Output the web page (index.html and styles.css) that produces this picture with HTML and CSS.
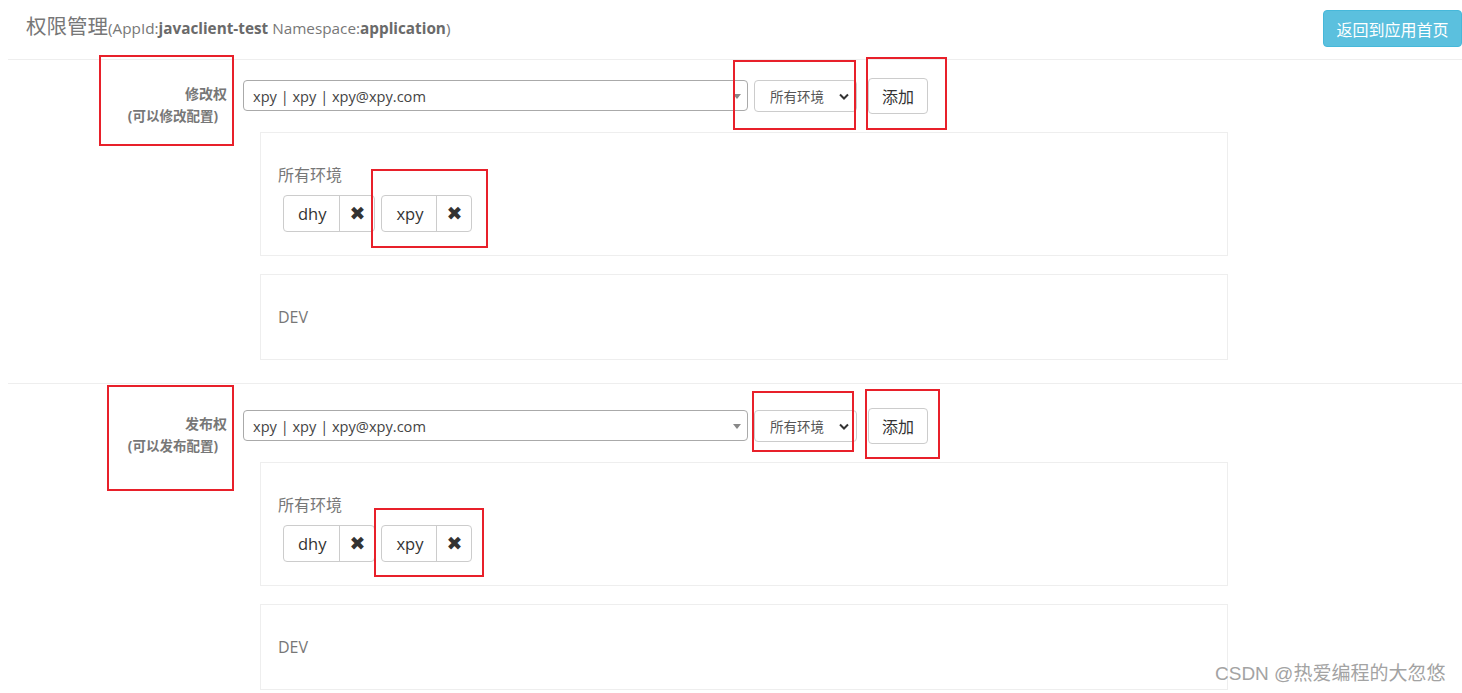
FILE: index.html
```html
<!DOCTYPE html>
<html lang="zh-CN">
<head>
    <meta charset="UTF-8">
    <meta name="viewport" content="width=device-width, initial-scale=1.0">
    <title>权限管理</title>
    <link rel="stylesheet" href="styles.css">
</head>
<body>
    <div class="page">
        <div class="header">
            <div class="title">
                <span class="title-main">权限管理</span><span class="title-sub">(AppId:<b>javaclient-test</b> Namespace:<b>application</b>)</span>
            </div>
            <button class="btn-info">返回到应用首页</button>
        </div>

        <!-- 修改权 -->
        <div class="perm-section first">
            <div class="form-row">
                <div class="perm-label">
                    <div>修改权</div>
                    <div class="perm-hint">(可以修改配置)</div>
                </div>
                <div class="user-select">
                    <span>xpy | xpy | xpy@xpy.com</span>
                    <span class="caret"></span>
                </div>
                <div class="env-select">
                    <span>所有环境</span>
                    <svg width="10" height="7" viewBox="0 0 10 7"><polyline points="1,1.5 5,5.5 9,1.5" fill="none" stroke="#333" stroke-width="2"/></svg>
                </div>
                <button class="btn-default">添加</button>
            </div>
            <div class="panels">
                <div class="panel">
                    <div class="panel-title">所有环境</div>
                    <div class="chips">
                        <div class="chip"><span class="chip-name">dhy</span><span class="chip-remove">✖</span></div>
                        <div class="chip"><span class="chip-name">xpy</span><span class="chip-remove">✖</span></div>
                    </div>
                </div>
                <div class="panel">
                    <div class="panel-title">DEV</div>
                </div>
            </div>
        </div>

        <!-- 发布权 -->
        <div class="perm-section">
            <div class="form-row">
                <div class="perm-label">
                    <div>发布权</div>
                    <div class="perm-hint">(可以发布配置)</div>
                </div>
                <div class="user-select">
                    <span>xpy | xpy | xpy@xpy.com</span>
                    <span class="caret"></span>
                </div>
                <div class="env-select">
                    <span>所有环境</span>
                    <svg width="10" height="7" viewBox="0 0 10 7"><polyline points="1,1.5 5,5.5 9,1.5" fill="none" stroke="#333" stroke-width="2"/></svg>
                </div>
                <button class="btn-default">添加</button>
            </div>
            <div class="panels">
                <div class="panel">
                    <div class="panel-title">所有环境</div>
                    <div class="chips">
                        <div class="chip"><span class="chip-name">dhy</span><span class="chip-remove">✖</span></div>
                        <div class="chip"><span class="chip-name">xpy</span><span class="chip-remove">✖</span></div>
                    </div>
                </div>
                <div class="panel">
                    <div class="panel-title">DEV</div>
                </div>
            </div>
        </div>
    </div>

    <!-- screenshot annotations -->
    <div class="mark" style="left:99px;top:55px;width:135px;height:91px"></div>
    <div class="mark" style="left:733px;top:60px;width:123px;height:70px"></div>
    <div class="mark" style="left:866px;top:57px;width:81px;height:73px"></div>
    <div class="mark" style="left:371px;top:169px;width:117px;height:79px"></div>
    <div class="mark" style="left:107px;top:385px;width:127px;height:106px"></div>
    <div class="mark" style="left:752px;top:391px;width:102px;height:61px"></div>
    <div class="mark" style="left:865px;top:389px;width:75px;height:70px"></div>
    <div class="mark" style="left:374px;top:508px;width:110px;height:69px"></div>

    <div class="watermark">CSDN @热爱编程的大忽悠</div>
</body>
</html>
```

FILE: styles.css
```css
body {
    margin: 0;
    font-family: 'Open Sans', 'Noto Sans CJK SC', sans-serif;
    background-color: #fff;
    color: #333;
}

.page {
    margin-left: 8px;
}

.header {
    display: flex;
    justify-content: space-between;
    align-items: flex-start;
    padding: 10px 0 12px 18px;
    border-bottom: 1px solid #eee;
}

.title {
    line-height: 32px;
    color: #777;
}

.title-main {
    font-size: 20.5px;
}

.title-sub {
    font-size: 15.3px;
}

.title-sub b {
    color: #6a6a6a;
}

.btn-info {
    height: 37px;
    width: 139px;
    padding: 0;
    border: 1px solid #46b8da;
    border-radius: 4px;
    background-color: #5bc0de;
    color: #fff;
    font-family: inherit;
    font-size: 16px;
}

.perm-section {
    padding: 26px 0 23px 0;
    border-bottom: 1px solid #eee;
}

.perm-section.first {
    padding-top: 20px;
}

.form-row {
    display: flex;
    align-items: flex-start;
    height: 34px;
}

.perm-label {
    width: 219px;
    margin-right: 16px;
    padding-top: 3px;
    text-align: right;
    font-size: 14px;
    font-weight: 700;
    line-height: 22px;
    color: #777;
}

.perm-hint {
    padding-right: 9px;
    font-size: 13.5px;
}

.user-select {
    position: relative;
    box-sizing: border-box;
    width: 505px;
    height: 31px;
    padding-left: 9px;
    border: 1px solid #aaa;
    border-radius: 4px;
    font-size: 14.6px;
    line-height: 30px;
    color: #444;
}

.caret {
    position: absolute;
    right: 6px;
    top: 13px;
    border-top: 5px solid #888;
    border-left: 4px solid transparent;
    border-right: 4px solid transparent;
}

.env-select {
    display: flex;
    align-items: center;
    justify-content: space-between;
    box-sizing: border-box;
    width: 103px;
    height: 32px;
    margin-left: 6px;
    padding: 0 7px 0 15px;
    border: 1px solid #ccc;
    border-radius: 4px;
    font-size: 13.5px;
    color: #555;
}

.btn-default {
    box-sizing: border-box;
    width: 60px;
    height: 36px;
    margin: -2px 0 0 11px;
    padding: 0;
    border: 1px solid #ccc;
    border-radius: 4px;
    background-color: #fff;
    font-family: inherit;
    font-size: 16px;
    color: #333;
}

.panels {
    display: flex;
    flex-direction: column;
    gap: 18px;
    margin: 18px 0 0 252px;
    width: 968px;
}

.panel {
    padding: 32px 17px 32px 17px;
    border: 1px solid #eee;
}

.panel:first-child {
    padding-bottom: 23px;
}

.panel-title {
    font-size: 16px;
    line-height: 20px;
    color: #777;
}

.chips {
    display: flex;
    gap: 6px;
    margin: 10px 0 0 5px;
}

.chip {
    display: flex;
    box-sizing: border-box;
    height: 37px;
    border: 1px solid #ccc;
    border-radius: 4px;
    font-size: 16.5px;
    line-height: 35px;
}

.chip-name {
    padding: 0 13px 0 14px;
    text-align: center;
    color: #333;
}

.chip-remove {
    width: 34px;
    border-left: 1px solid #ccc;
    text-align: center;
    font-family: 'DejaVu Sans', sans-serif;
    font-size: 19px;
    color: #333;
}

.mark {
    position: absolute;
    box-sizing: border-box;
    border: 2px solid #e8202a;
}

.watermark {
    position: absolute;
    left: 1215px;
    top: 658px;
    font-family: 'Liberation Sans', 'Noto Sans CJK SC', sans-serif;
    font-size: 19px;
    color: #a3a3a3;
    text-shadow: 0 0 2px #fff;
}
```
